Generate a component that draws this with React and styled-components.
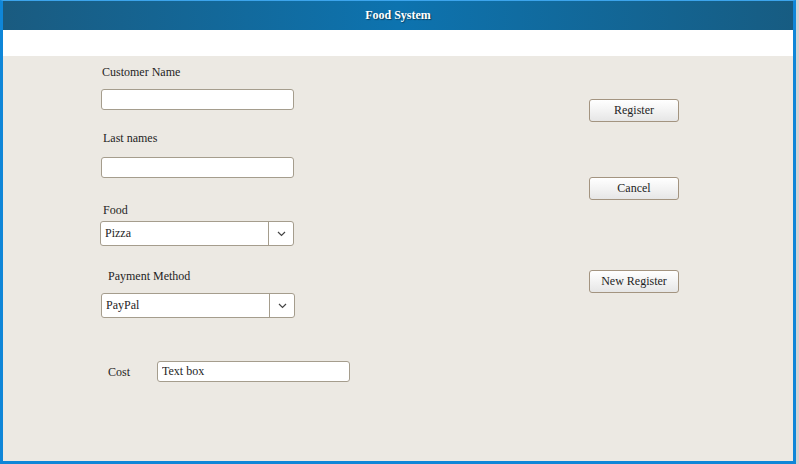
import React from 'react';
import styled, { createGlobalStyle } from 'styled-components';

const GlobalStyle = createGlobalStyle`
  html, body {
    margin: 0;
    padding: 0;
    background: #d2d2d2;
    font-family: "Liberation Serif", "Times New Roman", serif;
  }
`;

const Window = styled.div`
  width: 796px;
  height: 464px;
  box-sizing: border-box;
  border: 3px solid #0f86d8;
  border-top: 1px solid #3ca4ec;
  background: #ece9e3;
  display: flex;
  flex-direction: column;
`;

const TitleBar = styled.div`
  height: 29px;
  flex: none;
  display: flex;
  align-items: center;
  justify-content: center;
  background: linear-gradient(to right, #1a5b80 0%, #0d73af 50%, #175c82 100%);
  color: #fff;
  font-weight: bold;
  font-size: 12px;
  text-shadow: 1px 1px 1px rgba(0, 0, 0, 0.45);
`;

const Strip = styled.div`
  height: 26px;
  flex: none;
  background: #fff;
`;

const Content = styled.div`
  flex: 1;
  display: grid;
  grid-template-columns: 254px 90px;
  column-gap: 238px;
  align-items: start;
  padding-left: 94px;
`;

const Column = styled.div`
  display: flex;
  flex-direction: column;
  align-items: flex-start;
  padding-top: ${p => p.$top}px;
`;

const Label = styled.div`
  font-family: "Liberation Serif", "Times New Roman", serif;
  font-size: 12px;
  line-height: 14px;
  color: #1e1e1e;
  margin-top: ${p => p.$top || 0}px;
  margin-left: ${p => p.$left || 0}px;
`;

const TextInput = styled.input`
  box-sizing: border-box;
  width: 193px;
  height: 21px;
  margin-top: ${p => p.$top || 0}px;
  margin-left: ${p => p.$left || 0}px;
  border: 1px solid #a59d8d;
  border-radius: 3px;
  background: #fff;
  padding: 0 4px;
  font-family: "Liberation Serif", "Times New Roman", serif;
  font-size: 12px;
  color: #1e1e1e;
  outline: none;
`;

const Select = styled.div`
  box-sizing: border-box;
  width: 194px;
  height: 25px;
  margin-top: ${p => p.$top || 0}px;
  margin-left: ${p => p.$left || 0}px;
  border: 1px solid #a59d8d;
  border-radius: 3px;
  background: #fff;
  display: flex;
  font-size: 12px;
  color: #1e1e1e;
`;

const SelectValue = styled.div`
  flex: 1;
  display: flex;
  align-items: center;
  padding-left: 4px;
`;

const SelectArrow = styled.div`
  width: 24px;
  border-left: 1px solid #a59d8d;
  display: flex;
  align-items: center;
  justify-content: center;
`;

const CostRow = styled.div`
  display: flex;
  align-items: center;
  margin-top: 43px;
`;

const Button = styled.button`
  box-sizing: border-box;
  width: 90px;
  height: 23px;
  margin-top: ${p => p.$top || 0}px;
  border: 1px solid #a39480;
  border-radius: 3px;
  background: linear-gradient(to bottom, #ffffff 0%, #f3f3f3 50%, #e6e6e6 100%);
  font-family: "Liberation Serif", "Times New Roman", serif;
  font-size: 12px;
  color: #1e1e1e;
  padding: 0;
  cursor: pointer;
`;

const Chevron = () => (
  <svg width="9" height="6" viewBox="0 0 9 6">
    <polyline points="1,1 4.5,4.5 8,1" fill="none" stroke="#444" strokeWidth="1.2" />
  </svg>
);

const Dropdown = ({ value, top, left }) => (
  <Select $top={top} $left={left}>
    <SelectValue>{value}</SelectValue>
    <SelectArrow>
      <Chevron />
    </SelectArrow>
  </Select>
);

const App = () => {
  return (
    <>
      <GlobalStyle />
      <Window>
        <TitleBar>Food System</TitleBar>
        <Strip />
        <Content>
          <Column $top={9}>
            <Label $left={5}>Customer Name</Label>
            <TextInput $top={10} $left={4} />
            <Label $top={21} $left={6}>Last names</Label>
            <TextInput $top={12} $left={4} />
            <Label $top={25} $left={6}>Food</Label>
            <Dropdown value="Pizza" top={4} left={3} />
            <Label $top={23} $left={11}>Payment Method</Label>
            <Dropdown value="PayPal" top={10} left={4} />
            <CostRow>
              <Label $left={11}>Cost</Label>
              <TextInput $left={27} defaultValue="Text box" />
            </CostRow>
          </Column>
          <Column $top={43}>
            <Button>Register</Button>
            <Button $top={55}>Cancel</Button>
            <Button $top={70}>New Register</Button>
          </Column>
        </Content>
      </Window>
    </>
  );
};

export default App;
